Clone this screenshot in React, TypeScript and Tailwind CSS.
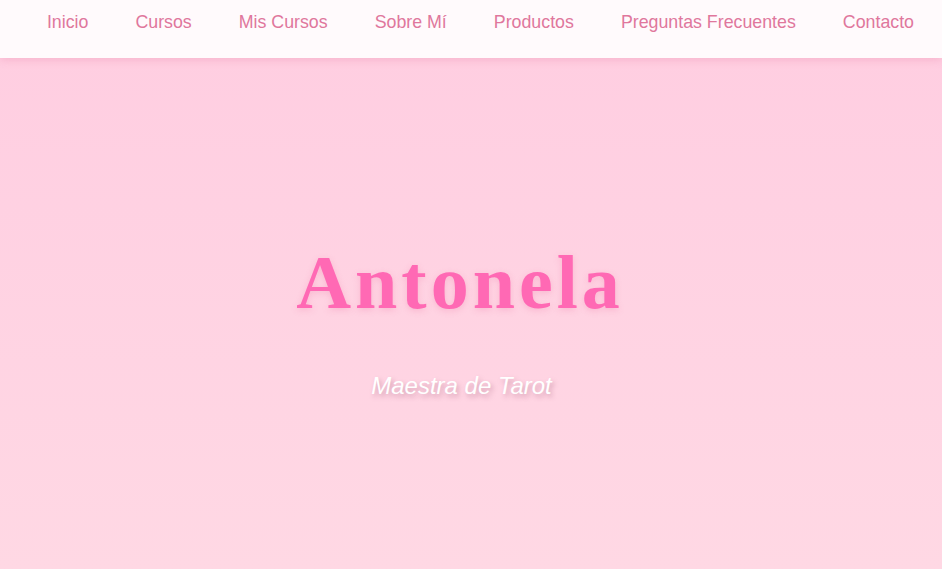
const links = ['Inicio', 'Cursos', 'Mis Cursos', 'Sobre Mí', 'Productos', 'Preguntas Frecuentes', 'Contacto']

export default function App() {
  return (
    <div className="min-h-screen h-[569px] flex flex-col bg-gradient-to-b from-[#ffcde1] to-[#ffd8e4] font-['Liberation_Sans',Arial,sans-serif]">
      <nav className="h-[58px] shrink-0 bg-[#fffafc] shadow-[0_2px_8px_rgba(230,120,160,0.3)] relative z-10">
        <ul className="flex justify-end gap-[47px] pr-[28px] pt-[9px] text-[17.8px] leading-[27px] text-[#e0779c]">
          {links.map((l) => (
            <li key={l}>
              <a href="#">{l}</a>
            </li>
          ))}
        </ul>
      </nav>
      <section className="flex-1 flex flex-col items-center justify-center pt-[14px] pr-[24px]">
        <h1 className="font-['Liberation_Serif','Times_New_Roman',serif] font-bold text-[76px] leading-none tracking-[4px] pl-[2px] text-[#ff69b4] [text-shadow:0_2px_6px_rgba(230,100,150,0.25)]">
          Antonela
        </h1>
        <p className="mt-[54px] ml-[5px] italic text-[24px] leading-none text-white [text-shadow:2px_3px_5px_rgba(150,80,110,0.4)]">
          Maestra de Tarot
        </p>
      </section>
    </div>
  )
}
